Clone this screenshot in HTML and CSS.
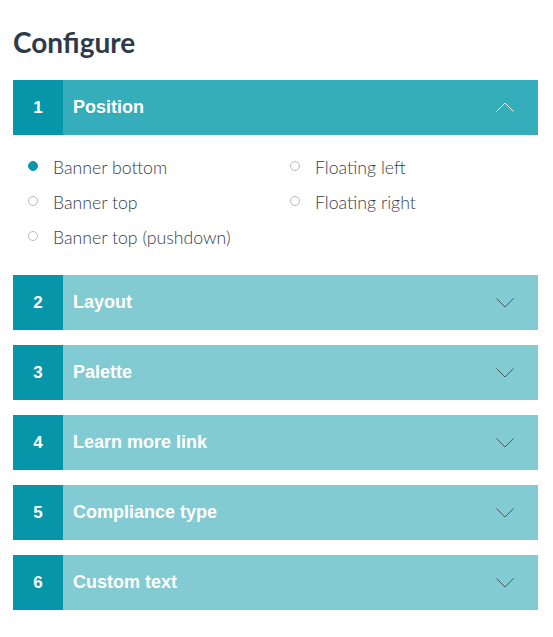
FILE: index.html
```html
<!DOCTYPE html>
<html>
<head>
<meta charset="utf-8">
<link rel="stylesheet" href="styles.css">
</head>
<body>
<div class="page">
  <h1 class="title">Configure</h1>
  <div class="accordion">
    <section class="panel open">
      <div class="head">
        <span class="num">1</span>
        <span class="label">Position</span>
        <svg class="chev" width="18" height="10" viewBox="0 0 18 10"><path d="M0.5 9.5 L9 1 L17.5 9.5" fill="none" stroke="#fff" stroke-width="1"/></svg>
      </div>
      <div class="body">
        <div class="options">
          <label class="opt checked"><span class="radio"></span>Banner bottom</label>
          <label class="opt"><span class="radio"></span>Floating left</label>
          <label class="opt"><span class="radio"></span>Banner top</label>
          <label class="opt"><span class="radio"></span>Floating right</label>
          <label class="opt"><span class="radio"></span>Banner top (pushdown)</label>
        </div>
      </div>
    </section>
    <section class="panel">
      <div class="head">
        <span class="num">2</span>
        <span class="label">Layout</span>
        <svg class="chev" width="18" height="10" viewBox="0 0 18 10"><path d="M0.5 0.5 L9 9 L17.5 0.5" fill="none" stroke="#4a5a5e" stroke-width="1"/></svg>
      </div>
    </section>
    <section class="panel">
      <div class="head">
        <span class="num">3</span>
        <span class="label">Palette</span>
        <svg class="chev" width="18" height="10" viewBox="0 0 18 10"><path d="M0.5 0.5 L9 9 L17.5 0.5" fill="none" stroke="#4a5a5e" stroke-width="1"/></svg>
      </div>
    </section>
    <section class="panel">
      <div class="head">
        <span class="num">4</span>
        <span class="label">Learn more link</span>
        <svg class="chev" width="18" height="10" viewBox="0 0 18 10"><path d="M0.5 0.5 L9 9 L17.5 0.5" fill="none" stroke="#4a5a5e" stroke-width="1"/></svg>
      </div>
    </section>
    <section class="panel">
      <div class="head">
        <span class="num">5</span>
        <span class="label">Compliance type</span>
        <svg class="chev" width="18" height="10" viewBox="0 0 18 10"><path d="M0.5 0.5 L9 9 L17.5 0.5" fill="none" stroke="#4a5a5e" stroke-width="1"/></svg>
      </div>
    </section>
    <section class="panel">
      <div class="head">
        <span class="num">6</span>
        <span class="label">Custom text</span>
        <svg class="chev" width="18" height="10" viewBox="0 0 18 10"><path d="M0.5 0.5 L9 9 L17.5 0.5" fill="none" stroke="#4a5a5e" stroke-width="1"/></svg>
      </div>
    </section>
  </div>
</div>
</body>
</html>
```
FILE: styles.css
```css
html, body {
  margin: 0;
  padding: 0;
  background: #fff;
}
.page {
  padding: 24px 15px 0 13px;
}
.title {
  font-family: Lato, "Open Sans", sans-serif;
  font-weight: 700;
  font-size: 28px;
  line-height: 36px;
  color: #2f3a48;
  margin: 0 0 20px 0;
}
.accordion {
  display: flex;
  flex-direction: column;
  gap: 15px;
}
.head {
  display: flex;
  align-items: center;
  height: 55px;
  background: #82cbd3;
  font-family: "Liberation Sans", Arial, sans-serif;
  font-weight: 700;
  font-size: 18px;
  color: #fff;
}
.panel.open .head {
  background: #36adba;
}
.num {
  width: 50px;
  height: 100%;
  display: flex;
  align-items: center;
  justify-content: center;
  background: #0796a9;
  font-size: 17px;
}
.label {
  flex: 1;
  padding-left: 10px;
}
.chev {
  margin-right: 24px;
  display: block;
}
.panel.open .chev {
  margin-top: -2px;
}
.body {
  padding: 15px 0 5px 0;
}
.options {
  display: grid;
  grid-template-columns: 262px 1fr;
  row-gap: 0;
  padding-left: 15px;
}
.opt {
  display: flex;
  align-items: center;
  height: 35px;
  font-family: Lato, "Open Sans", sans-serif;
  font-weight: 300;
  font-size: 17.7px;
  color: #363d4a;
}
.radio {
  box-sizing: border-box;
  width: 10px;
  height: 10px;
  border-radius: 50%;
  border: 1px solid #b9b9b9;
  margin: -3px 15px 0 0;
  flex: none;
}
.opt.checked .radio {
  background: #0a98a8;
  border-color: #0a98a8;
}
```
